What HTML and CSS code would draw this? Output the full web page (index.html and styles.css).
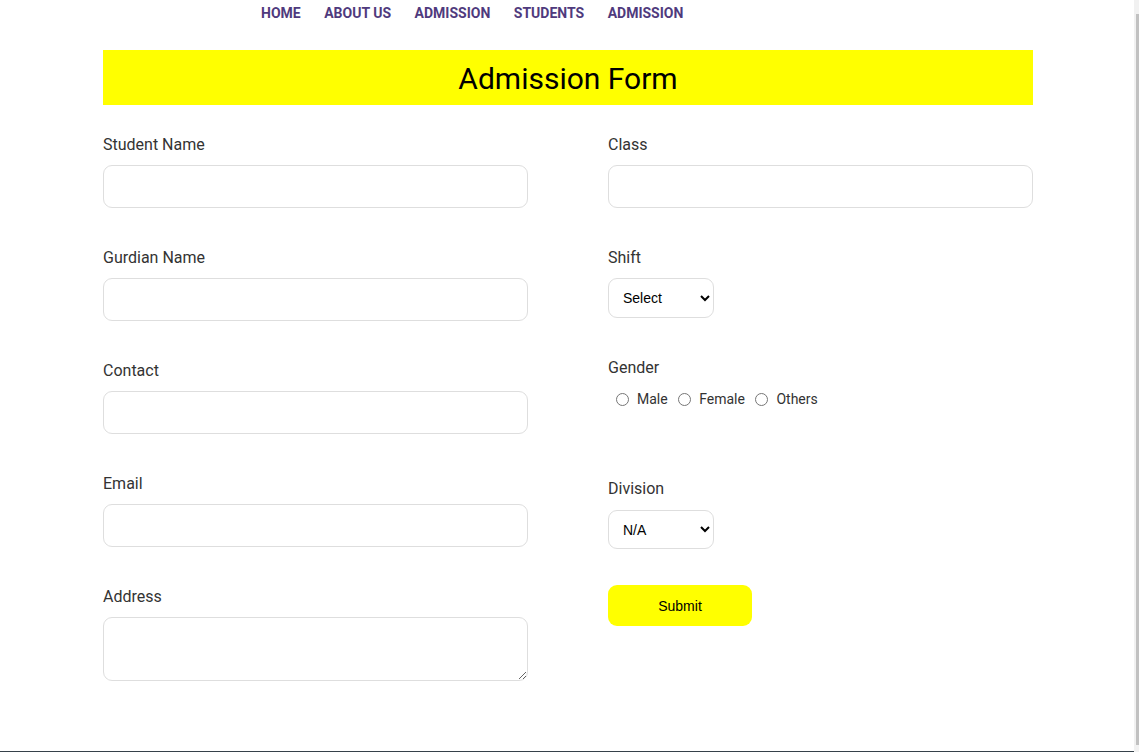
FILE: index.html
```html
<!DOCTYPE html>
<html lang="en">
<head>
<meta charset="utf-8">
<title>Admission Form</title>
<link rel="stylesheet" href="styles.css">
</head>
<body>
<nav class="nav">
  <a href="#">HOME</a>
  <a href="#">ABOUT US</a>
  <a href="#">ADMISSION</a>
  <a href="#">STUDENTS</a>
  <a href="#">ADMISSION</a>
</nav>
<main class="wrap">
  <h1 class="title">Admission Form</h1>
  <form class="form">
    <div class="col">
      <div class="field"><label class="lbl">Student Name</label><input class="inp" type="text"></div>
      <div class="field"><label class="lbl">Gurdian Name</label><input class="inp" type="text"></div>
      <div class="field"><label class="lbl">Contact</label><input class="inp" type="text"></div>
      <div class="field"><label class="lbl">Email</label><input class="inp" type="text"></div>
      <div class="field last"><label class="lbl">Address</label><textarea class="inp area"></textarea></div>
    </div>
    <div class="col">
      <div class="field"><label class="lbl">Class</label><input class="inp" type="text"></div>
      <div class="field f-shift"><label class="lbl">Shift</label>
        <select class="sel"><option>Select</option><option>Morning</option><option>Day</option></select>
      </div>
      <div class="field f-gender"><label class="lbl">Gender</label>
        <div class="radios">
          <label class="rad"><input type="radio" name="g"> Male</label>
          <label class="rad"><input type="radio" name="g"> Female</label>
          <label class="rad"><input type="radio" name="g"> Others</label>
        </div>
      </div>
      <div class="field f-div"><label class="lbl">Division</label>
        <select class="sel sel-div"><option>N/A</option><option>Science</option><option>Arts</option></select>
      </div>
      <button class="btn" type="button">Submit</button>
    </div>
  </form>
</main>
<footer class="foot"></footer>
<div class="sbar"><div class="thumb"></div></div>
</body>
</html>
```
FILE: styles.css
```css
html, body { margin: 0; padding: 0; }
body {
  font-family: Roboto, "Liberation Sans", sans-serif;
  background: #fff;
  height: 752px;
  overflow: hidden;
  padding-right: 3px;
}
.nav {
  display: flex;
  gap: 23.5px;
  padding-left: 261px;
  height: 26px;
  align-items: center;
}
.nav a {
  font-size: 14px;
  font-weight: 700;
  color: #4f3a7d;
  text-decoration: none;
}
.wrap {
  width: 930px;
  margin: 24px auto 0;
}
.title {
  margin: 0;
  background: #ffff00;
  height: 55px;
  line-height: 57px;
  text-align: center;
  font-size: 30px;
  font-weight: 400;
  color: #000;
}
.form {
  display: grid;
  grid-template-columns: 425px 425px;
  column-gap: 80px;
  padding-top: 28px;
}
.col { display: flex; flex-direction: column; }
.field { display: flex; flex-direction: column; margin-bottom: 38px; }
.field.last { margin-bottom: 0; }
.lbl {
  font-size: 16px;
  line-height: 24px;
  color: #333;
  margin-bottom: 8px;
}
.inp {
  box-sizing: border-box;
  height: 43px;
  width: 100%;
  border: 1px solid #dedede;
  border-radius: 9px;
  background: #fff;
  font-size: 14px;
  padding: 0 12px;
  outline: none;
}
.area { height: 64px; padding: 8px 12px; resize: vertical; }
.sel {
  box-sizing: border-box;
  width: 106px;
  height: 40px;
  border: 1px solid #dedede;
  border-radius: 9px;
  background: #fff;
  font-family: "Liberation Sans", Arial, sans-serif;
  font-size: 14px;
  color: #000;
  padding: 0 8px 0 10px;
}
.sel-div { height: 39px; }
.f-gender { margin-bottom: 67px; }
.radios { display: flex; gap: 2.5px; height: 22px; align-items: center; }
.rad {
  font-size: 14px;
  color: #333;
  display: inline-flex;
  align-items: center;
}
.rad input { margin: 0 8px 0 8px; width: 13px; height: 13px; }
.f-div { margin-bottom: 36px; }
.f-div .lbl { margin-bottom: 9px; }
.btn {
  width: 144px;
  height: 41px;
  border: none;
  border-radius: 9px;
  background: #ffff00;
  font-family: "Liberation Sans", Arial, sans-serif;
  font-size: 14px;
  color: #000;
}
.foot {
  background: #36414a;
  height: 1px;
  margin-top: 70px;
}
.sbar {
  position: fixed;
  top: 0;
  right: 0;
  width: 5px;
  height: 100%;
  background: #f1f1f1;
}
.thumb {
  position: absolute;
  top: 14px;
  bottom: 7px;
  right: 0;
  width: 3px;
  background: #c1c1c1;
}
```
